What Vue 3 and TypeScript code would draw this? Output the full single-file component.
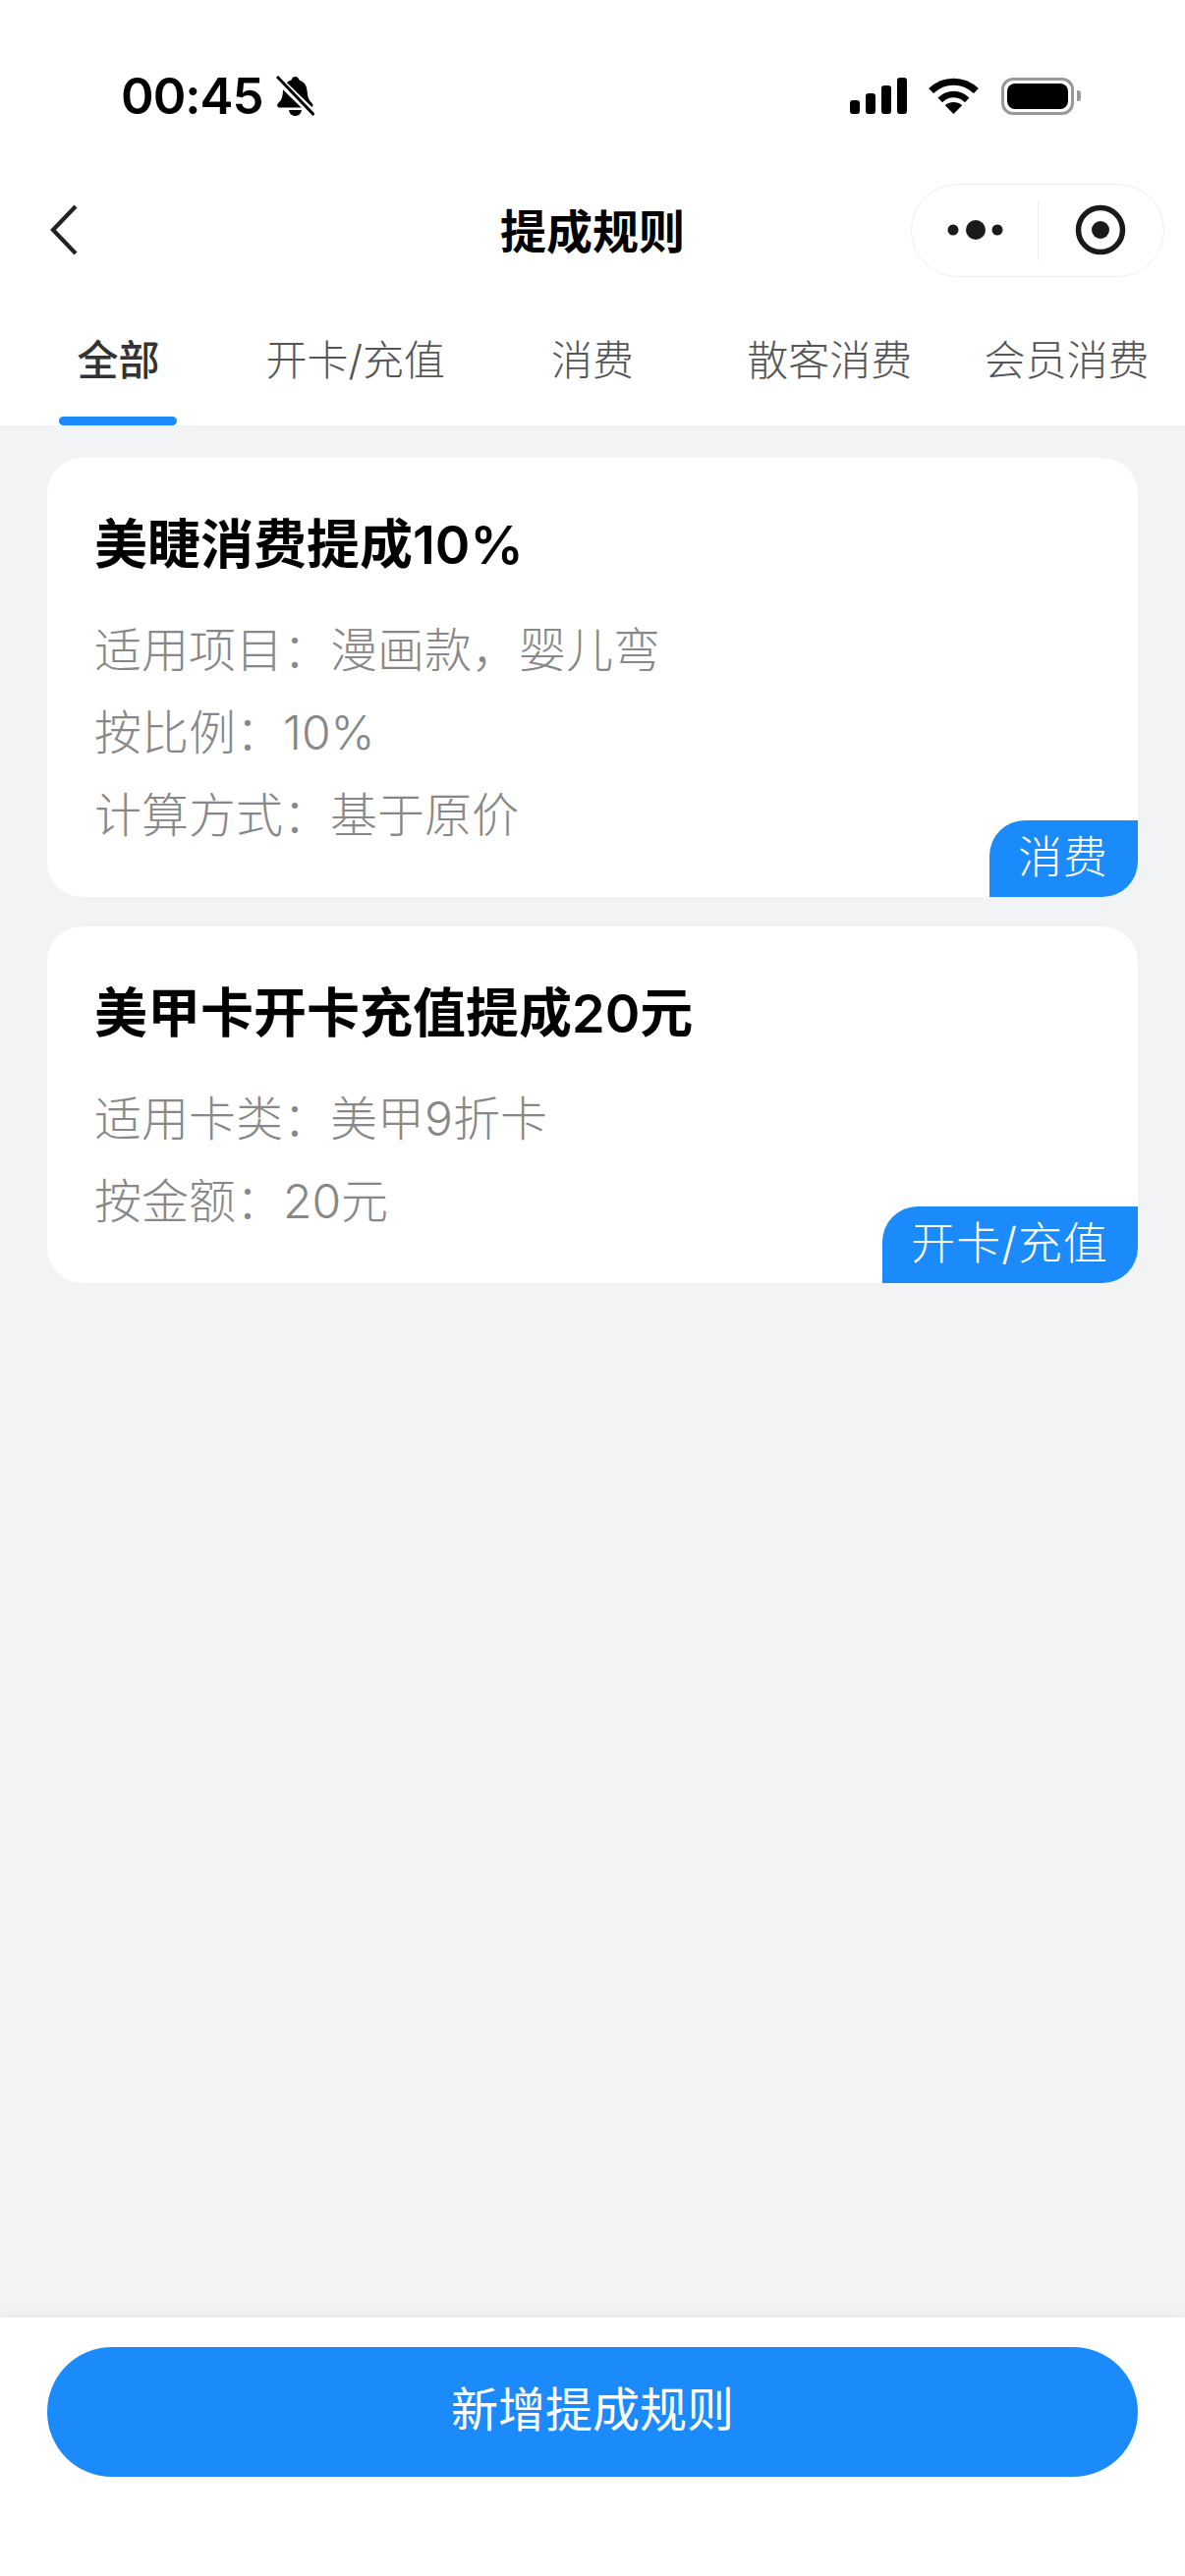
<script setup lang="ts">
interface Rule {
  title: string
  lines: string[]
  tag: string
}
const tabs: string[] = ['全部', '开卡/充值', '消费', '散客消费', '会员消费']
const rules: Rule[] = [
  { title: '美睫消费提成10%', lines: ['适用项目：漫画款，婴儿弯', '按比例：10%', '计算方式：基于原价'], tag: '消费' },
  { title: '美甲卡开卡充值提成20元', lines: ['适用卡类：美甲9折卡', '按金额：20元'], tag: '开卡/充值' },
]
</script>

<template>
  <div class="page">
    <header class="head">
      <div class="status">
        <span class="time">00:45</span>
        <svg class="bell" width="39" height="42" viewBox="0 0 39 42">
          <path d="M19.5 1c2.200 0 3.600 1.500 4 3.600 5.400 1.600 7.800 6 8.200 12 .3 5 1.400 8.600 4.500 11.200 2.200 2 1.400 4.700-1.600 4.700H4.100c-3.200 0-3.800-2.800-1.700-4.800 3.400-2.700 4.200-6.400 4.500-11.100.4-6 2.800-10.400 8.600-12C15.900 2.500 17.300 1 19.500 1Z" fill="#000"/>
          <path d="M13 35h13c-.5 3.800-3.200 6-6.500 6S13.500 38.800 13 35Z" fill="#000"/>
          <path d="M0 2 38 39" stroke="#fff" stroke-width="8"/>
          <path d="M1 1 38.500 40" stroke="#000" stroke-width="3"/>
        </svg>
        <span class="spacer"></span>
        <svg width="58" height="37" viewBox="0 0 58 37">
          <rect x="0" y="23" width="10" height="14" rx="3" fill="#000"/>
          <rect x="16" y="16" width="10" height="21" rx="3" fill="#000"/>
          <rect x="32" y="8" width="10" height="29" rx="3" fill="#000"/>
          <rect x="48" y="0" width="10" height="37" rx="3" fill="#000"/>
        </svg>
        <svg class="wifi" width="51" height="37" viewBox="0 0 51 37">
          <path d="M2.600 13.500C15.500 1 35.500 1 48.400 13.500" fill="none" stroke="#000" stroke-width="7"/>
          <path d="M11.800 22.800C19.700 15.200 31.300 15.200 39.200 22.800" fill="none" stroke="#000" stroke-width="6.500"/>
          <path d="M25.500 37 16.800 28.200C21.800 23.900 29.200 23.900 34.200 28.200Z" fill="#000"/>
        </svg>
        <div class="battery">
          <div class="battery-body"><div class="battery-fill"></div></div>
          <div class="battery-nub"></div>
        </div>
      </div>
      <div class="nav">
        <svg class="back" width="28" height="52" viewBox="0 0 28 52">
          <path d="M26 2 3 26l23 24" fill="none" stroke="#222" stroke-width="4.200"/>
        </svg>
        <div class="nav-title">提成规则</div>
        <div class="capsule">
          <svg width="129" height="95" viewBox="0 0 129 95">
            <circle cx="42" cy="47" r="5.500" fill="#1a1a1a"/>
            <circle cx="65" cy="47" r="10" fill="#1a1a1a"/>
            <circle cx="87" cy="47" r="5.500" fill="#1a1a1a"/>
          </svg>
          <span class="capsule-line"></span>
          <svg width="129" height="95" viewBox="0 0 129 95">
            <circle cx="64" cy="47" r="22.500" fill="none" stroke="#1a1a1a" stroke-width="5.500"/>
            <circle cx="64" cy="47" r="9" fill="#1a1a1a"/>
          </svg>
        </div>
      </div>
      <nav class="tabs">
        <div v-for="(t, i) in tabs" :key="t" class="tab" :class="{ active: i === 0 }">
          {{ t }}
          <span v-if="i === 0" class="ink"></span>
        </div>
      </nav>
    </header>

    <main class="list">
      <article v-for="r in rules" :key="r.title" class="card">
        <h2 class="card-title">{{ r.title }}</h2>
        <p v-for="l in r.lines" :key="l" class="card-line">{{ l }}</p>
        <span class="tag">{{ r.tag }}</span>
      </article>
    </main>

    <footer class="foot">
      <button class="add">新增提成规则</button>
    </footer>
  </div>
</template>

<style>
html, body { margin: 0; background: #f2f3f5; }
</style>

<style scoped>
.page {
  width: 1206px;
  height: 2622px;
  display: flex;
  flex-direction: column;
  overflow: hidden;
  background: #f2f3f5;
  font-family: Inter, "Noto Sans CJK SC", "Noto Sans", sans-serif;
}
.head { background: #fff; height: 433px; flex: none; }
.status {
  height: 133px;
  padding: 31px 106px 0 123px;
  display: flex;
  align-items: center;
}
.time {
  font-family: Inter, "Liberation Sans", sans-serif;
  font-size: 51px;
  font-weight: 600;
  line-height: 60px;
  letter-spacing: -1px;
  color: #000;
}
.bell { margin-left: 13px; }
.spacer { flex: 1; }
.wifi { margin-left: 22px; }
.battery { margin-left: 23px; display: flex; align-items: center; }
.battery-body {
  width: 74px;
  height: 38px;
  box-sizing: border-box;
  border: 3px solid #999;
  border-radius: 12px;
  padding: 3px;
}
.battery-fill { height: 100%; background: #000; border-radius: 8px; }
.battery-nub {
  width: 4px;
  height: 11px;
  margin-left: 3px;
  background: #999;
  border-radius: 0 3px 3px 0;
}
.nav {
  height: 140px;
  display: flex;
  align-items: center;
  justify-content: space-between;
  padding: 0 21px 0 51px;
  position: relative;
}
.back { display: block; }
.nav-title {
  position: absolute;
  left: 0;
  right: 0;
  top: 37px;
  line-height: 70px;
  text-align: center;
  font-size: 47px;
  font-weight: 700;
  color: #000;
}
.capsule {
  width: 258px;
  height: 95px;
  box-sizing: border-box;
  border: 1.500px solid #eee;
  border-radius: 48px;
  display: flex;
  align-items: center;
  justify-content: center;
  margin-top: 1px;
}
.capsule svg { display: block; flex: none; margin: 0 -1px; }
.capsule-line { width: 1px; height: 60px; background: #eee; flex: none; }
.tabs {
  display: grid;
  grid-template-columns: repeat(5, 1fr);
  height: 129px;
}
.tab {
  position: relative;
  height: 129px;
  text-align: center;
  font-size: 42px;
  line-height: 126px;
  font-weight: 300;
  color: #555;
  white-space: nowrap;
}
.tab.active { color: #333; font-weight: 500; }
.ink {
  position: absolute;
  left: 60px;
  top: 120px;
  width: 120px;
  height: 9px;
  border-radius: 5px;
  background: #1b8afb;
}
.list {
  flex: 1;
  padding: 33px 48px 0;
  display: flex;
  flex-direction: column;
  gap: 30px;
}
.card {
  position: relative;
  background: #fff;
  border-radius: 36px;
  padding: 50px 48px 41px;
}
.card-title {
  margin: 0 0 26px;
  font-size: 54px;
  line-height: 78px;
  font-weight: 600;
  color: #000;
}
.card-line {
  margin: 0;
  font-size: 48px;
  line-height: 84px;
  font-weight: 300;
  color: #888;
}
.tag {
  position: absolute;
  right: 0;
  bottom: 0;
  height: 78px;
  padding: 0 30px 0 29px;
  font-size: 45px;
  line-height: 75px;
  font-weight: 300;
  letter-spacing: 1px;
  color: #fff;
  background: #1b8afb;
  border-radius: 36px 0 36px 0;
}
.foot {
  flex: none;
  height: 263px;
  box-sizing: border-box;
  padding: 30px 48px 0;
  background: #fff;
  box-shadow: 0 -2px 14px rgba(0, 0, 0, 0.05);
}
.add {
  display: block;
  width: 100%;
  height: 132px;
  border: 0;
  border-radius: 66px;
  background: #1b8afb;
  color: #fff;
  font-family: inherit;
  font-size: 48px;
  font-weight: 400;
  line-height: 128px;
  padding: 0 0 4px;
}
</style>
